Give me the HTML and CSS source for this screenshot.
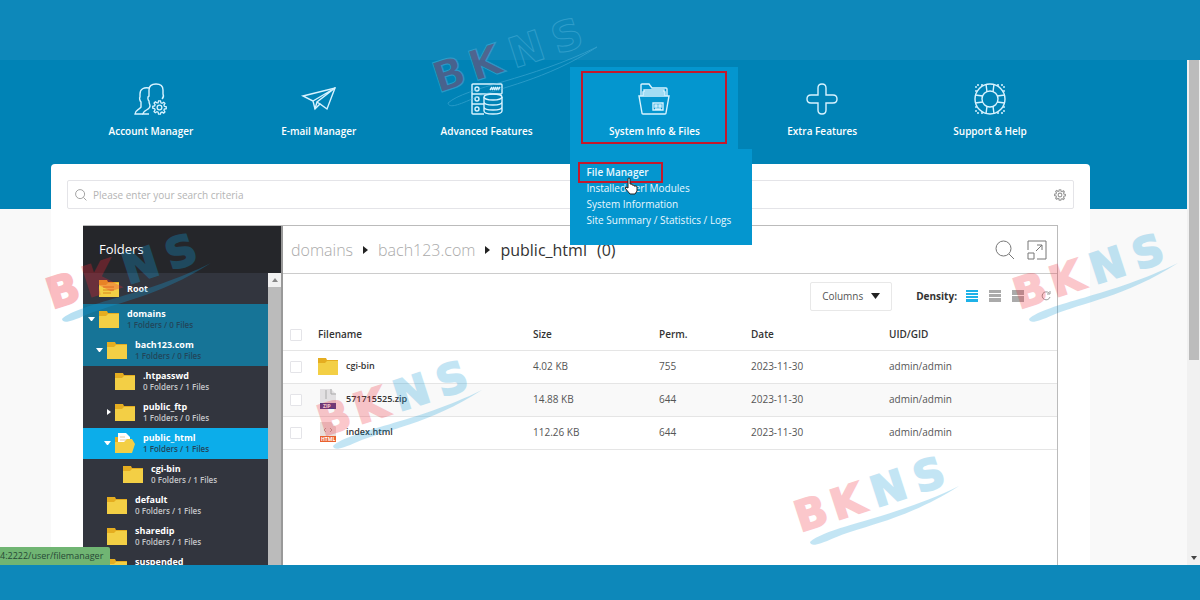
FILE: index.html
```html
<!DOCTYPE html>
<html lang="en">
<head>
<meta charset="utf-8">
<title>File Manager</title>
<link rel="stylesheet" href="styles.css">
</head>
<body>
<svg class="defs" width="0" height="0" aria-hidden="true">
  <symbol id="folder" viewBox="0 0 20 18"><path fill="#e5ad20" d="M0 1h8l1 2h11v4H0z"/><path fill="#f3cf45" d="M0 6h7l2-2h11v14H0z"/></symbol>
  <symbol id="swoosh" viewBox="0 0 180 100"><path d="M18 88C36 72 100 65 167 32C114 66 70 72 42 84C26 91 19 93 18 88z"/></symbol>
  <symbol id="lens" viewBox="0 0 20 20"><circle cx="8.500" cy="8.500" r="7.500" fill="none"/><path d="M14 14l5 5" fill="none"/></symbol>
  <symbol id="gear" viewBox="0 0 16 16"><path fill="none" d="M7 1h2l.5 2 1.200.5 1.800-1.100 1.300 1.300-1.100 1.800.5 1.200 2 .5v2l-2 .5-.5 1.200 1.100 1.800-1.300 1.300-1.800-1.100-1.200.5L9 15H7l-.5-2-1.200-.5-1.800 1.100-1.300-1.300 1.100-1.800L2.800 9.300l-2-.5v-2l2-.5.5-1.200-1.100-1.800 1.300-1.300 1.800 1.100L6.500 3z"/><circle cx="8" cy="8" r="2.500" fill="none"/></symbol>
</svg>
<div class="stage">
  <div class="app">
    <div class="viewport">
      <header class="header">
        <nav class="nav">
          <a class="nav-item" href="#"><svg class="nav-icon" viewBox="0 0 32 32"><path d="M14 31H8c0-4 7-4 7-8 0-2-1-2-1-5-1-1-2-4 0-5V7c0-4 3-6 7-6s7 2 7 6v4c1 2 0 4-1 5"/><path d="M14 5c-5-1-9 1-9 6v3c-1 1 0 4 1 5v5c-2 3-6 3-6 7h8"/><svg x="17" y="17" width="15" height="15"><use href="#gear"/></svg></svg><span>Account Manager</span></a>
          <a class="nav-item" href="#"><svg class="nav-icon" viewBox="0 0 32 32"><path d="M0 13L32 5 24 26 17 21 12 26 10 18z"/><path d="M32 5L10 18M32 5L14 19l3 2M14 19l-2 7"/></svg><span>E-mail Manager</span></a>
          <a class="nav-item" href="#"><svg class="nav-icon" viewBox="0 0 32 32"><path d="M13 31H2q-1 0-1-1V2q0-1 1-1h28q1 0 1 1v8q0 1-1 1H1M1 21h12M19 7l2-3M21 7l2-3M23 7l2-3M25 7l2-3M27 7l2-3"/><circle cx="6" cy="6" r="2"/><circle cx="6" cy="16" r="2"/><circle cx="6" cy="26" r="2"/><ellipse cx="22" cy="14" rx="9" ry="3"/><path d="M13 14v14c0 4 18 4 18 0V14M13 19c0 4 18 4 18 0M13 24c0 4 18 4 18 0"/></svg><span>Advanced Features</span></a>
          <div class="nav-group">
            <a class="nav-item active" href="#"><svg class="nav-icon" viewBox="0 0 32 32"><path d="M1 13h30l-3 17q0 1-1 1H5q-1 0-1-1zM3 13V2q0-1 1-1h7l3 4h14q1 0 1 1v7M5 13V9h22v4M6 9V7h20v2M5 11h22"/><path d="M15 20h10v7H15zM17 22h2v2h-2zM21 22h2v2h-2zM17 26h6"/></svg><span>System Info &amp; Files</span></a>
            <div class="mark mark-nav"></div>
            <div class="menu">
              <a class="current" href="#">File Manager</a>
              <a href="#">Installed Perl Modules</a>
              <a href="#">System Information</a>
              <a href="#">Site Summary / Statistics / Logs</a>
              <div class="mark mark-menu"></div>
              <svg class="pointer" viewBox="0 0 14 18"><path d="M4 11V2q0-1 1-1t1 1v5h2v1h2v1h2q1 0 1 1v4l-2 3H6L1 11q0-2 3 0z" fill="#fff" stroke="#222" stroke-width="1"/></svg>
            </div>
          </div>
          <a class="nav-item" href="#"><svg class="nav-icon" viewBox="0 0 32 32"><path d="M12 12V5q0-4 4-4t4 4v7h7q4 0 4 4t-4 4h-7v7q0 4-4 4t-4-4v-7H5q-4 0-4-4t4-4z"/></svg><span>Extra Features</span></a>
          <a class="nav-item" href="#"><svg class="nav-icon" viewBox="0 0 32 32"><circle cx="16" cy="16" r="15"/><circle cx="16" cy="16" r="8"/><path d="M12 1l1 8M20 1l-1 8M12 31l1-8M20 31l-1-8M1 12l8 1M1 20l8-1M31 12l-8 1M31 20l-8-1"/><path stroke-dasharray="2 2" d="M2 9V2h7M23 2h7v7M30 23v7h-7M9 30H2v-7"/></svg><span>Support &amp; Help</span></a>
        </nav>
      </header>
      <main class="panel">
        <form class="search">
          <svg class="search-icon"><use href="#lens"/></svg>
          <input type="text" aria-label="Search" placeholder="Please enter your search criteria">
          <button class="plain" type="button" aria-label="Search settings"><svg class="search-icon"><use href="#gear"/></svg></button>
        </form>
        <div class="manager">
          <aside class="folders">
            <h2>Folders</h2>
            <div class="tree-wrap">
              <ul class="tree">
                <li><span class="caret"></span><svg class="folder"><use href="#folder"/><path d="M4 9h11M4 12h11M4 15h8" stroke="#d9861d"/></svg><a href="#">Root</a></li>
                <li class="open"><span class="caret down"></span><svg class="folder"><use href="#folder"/></svg><a href="#">domains<small>1 Folders / 0 Files</small></a></li>
                <li class="open l1"><span class="caret down"></span><svg class="folder"><use href="#folder"/></svg><a href="#">bach123.com<small>1 Folders / 0 Files</small></a></li>
                <li class="l2"><span class="caret"></span><svg class="folder"><use href="#folder"/></svg><a href="#">.htpasswd<small>0 Folders / 1 Files</small></a></li>
                <li class="l2"><span class="caret right"></span><svg class="folder"><use href="#folder"/></svg><a href="#">public_ftp<small>1 Folders / 0 Files</small></a></li>
                <li class="l2 selected"><span class="caret down"></span><svg class="folder" viewBox="0 0 20 20"><path d="M0 4h3v14H0z" fill="#e5ad20"/><path d="M3 0h8l4 4v8H3z" fill="#fff"/><path d="M5 4h5M5 7h8" stroke="#e9c9a0"/><path d="M0 9h9l3-3h5l3 5-3 9H0z" fill="#f3cf45"/></svg><a href="#">public_html<small>1 Folders / 1 Files</small></a></li>
                <li class="l3"><span class="caret"></span><svg class="folder"><use href="#folder"/></svg><a href="#">cgi-bin<small>0 Folders / 1 Files</small></a></li>
                <li class="l1"><span class="caret"></span><svg class="folder"><use href="#folder"/></svg><a href="#">default<small>0 Folders / 1 Files</small></a></li>
                <li class="l1"><span class="caret"></span><svg class="folder"><use href="#folder"/></svg><a href="#">sharedip<small>0 Folders / 1 Files</small></a></li>
                <li class="l1 last"><span class="caret"></span><svg class="folder"><use href="#folder"/></svg><a href="#">suspended</a></li>
              </ul>
              <div class="tree-scroll"><span class="up"></span></div>
            </div>
          </aside>
          <section class="files">
            <div class="crumbs">
              <a href="#">domains</a><span class="sep"></span><a href="#">bach123.com</a><span class="sep"></span><span class="here">public_html</span><span class="count">(0)</span>
              <div class="crumb-tools">
                <button class="plain" type="button" aria-label="Search files"><svg class="tool"><use href="#lens"/></svg></button>
                <button class="plain" type="button" aria-label="Expand"><svg class="tool" viewBox="0 0 20 20"><path fill="none" d="M1 10V1h18v18h-9M1 13h6v6H1zM9 11l6-6M10 5h5v5"/></svg></button>
              </div>
            </div>
            <div class="toolbar">
              <button class="columns" type="button">Columns <svg viewBox="0 0 9 6"><path d="M0 0h9L4.500 6z" fill="#222"/></svg></button>
              <strong>Density:</strong>
              <div class="density">
                <button class="plain on" type="button" aria-label="Compact"><svg viewBox="0 0 12 12"><path d="M0 0h12v2H0zM0 3h12v2H0zM0 6h12v2H0zM0 9h12v3H0z"/></svg></button>
                <button class="plain" type="button" aria-label="Normal"><svg viewBox="0 0 12 12"><path d="M0 0h12v3H0zM0 4h12v3H0zM0 8h12v4H0z"/></svg></button>
                <button class="plain" type="button" aria-label="Comfortable"><svg viewBox="0 0 12 12"><path d="M0 0h12v5H0zM0 6h12v6H0z"/></svg></button>
              </div>
              <button class="plain refresh" type="button" aria-label="Refresh"><svg viewBox="0 0 12 12"><path d="M9 3a4 4 0 1 0 1 4M10 1v3H7" fill="none" stroke="#999"/></svg></button>
            </div>
            <table>
              <colgroup><col class="c-check"><col class="c-name"><col class="c-size"><col class="c-perm"><col class="c-date"><col></colgroup>
              <thead><tr><th><input type="checkbox" aria-label="Select all"></th><th>Filename</th><th>Size</th><th>Perm.</th><th>Date</th><th>UID/GID</th></tr></thead>
              <tbody>
                <tr><td><input type="checkbox" aria-label="Select cgi-bin"></td><td><div class="name"><svg class="folder"><use href="#folder"/></svg>cgi-bin</div></td><td>4.02 KB</td><td>755</td><td>2023-11-30</td><td>admin/admin</td></tr>
                <tr><td><input type="checkbox" aria-label="Select 571715525.zip"></td><td><div class="name"><svg class="folder" viewBox="0 0 20 20"><path d="M2 0h11l5 5v15H2z" fill="#e2e0e2"/><path d="M13 0v5h5M8 1v9" fill="none" stroke="#aaa"/><path d="M2 14h16v6H2z" fill="#49408b"/><text class="ext" x="5" y="19">ZIP</text></svg>571715525.zip</div></td><td>14.88 KB</td><td>644</td><td>2023-11-30</td><td>admin/admin</td></tr>
                <tr><td><input type="checkbox" aria-label="Select index.html"></td><td><div class="name"><svg class="folder" viewBox="0 0 20 20"><path d="M2 0h11l5 5v15H2z" fill="#e8dfdc"/><path d="M8 6l-2 2 2 2M12 6l2 2-2 2" fill="none" stroke="#b9a09a"/><path d="M2 14h16v6H2z" fill="#e9622f"/><text class="ext" x="3" y="19">HTML</text></svg>index.html</div></td><td>112.26 KB</td><td>644</td><td>2023-11-30</td><td>admin/admin</td></tr>
              </tbody>
            </table>
          </section>
        </div>
      </main>
    </div>
    <div class="page-scroll"><span class="thumb"></span><span class="arrow"></span></div>
    <div class="status">4:2222/user/filemanager</div>
  </div>
  <svg class="brand b1" viewBox="0 0 180 100"><g transform="translate(12 77) rotate(-18)"><text class="bk" x="-4" y="0">B</text><text class="bk" x="34" y="0">K</text><text class="ns" x="76" y="0">N</text><text class="ns" x="121" y="0">S</text></g><use class="line" href="#swoosh"/></svg>
  <svg class="brand b2" viewBox="0 0 180 100"><g transform="translate(12 77) rotate(-18)"><text class="bk" x="-4" y="0">B</text><text class="bk" x="34" y="0">K</text><text class="ns" x="76" y="0">N</text><text class="ns" x="121" y="0">S</text></g><use class="line" href="#swoosh"/></svg>
  <svg class="brand b3" viewBox="0 0 180 100"><g transform="translate(12 77) rotate(-18)"><text class="bk" x="-4" y="0">B</text><text class="bk" x="34" y="0">K</text><text class="ns" x="76" y="0">N</text><text class="ns" x="121" y="0">S</text></g><use class="line" href="#swoosh"/></svg>
  <svg class="brand b4" viewBox="0 0 180 100"><g transform="translate(12 77) rotate(-18)"><text class="bk" x="-4" y="0">B</text><text class="bk" x="34" y="0">K</text><text class="ns" x="76" y="0">N</text><text class="ns" x="121" y="0">S</text></g><use class="line" href="#swoosh"/></svg>
  <svg class="brand b5" viewBox="0 0 180 100"><g transform="translate(12 77) rotate(-18)"><text class="bk" x="-4" y="0">B</text><text class="bk" x="34" y="0">K</text><text class="ns" x="76" y="0">N</text><text class="ns" x="121" y="0">S</text></g><use class="line" href="#swoosh"/></svg>
</div>
</body>
</html>
```

FILE: styles.css
```css
* { box-sizing: border-box; }
body { margin: 0; font-family: "Open Sans", "Noto Sans", sans-serif; font-size: 10px; line-height: 16px; color: #555; }
a { color: inherit; text-decoration: none; }
svg { display: block; overflow: visible; }
.defs { position: absolute; }
.plain { border: 0; padding: 0; background: none; }

.stage { position: relative; height: 100vh; overflow: hidden; padding: 60px 0 35px; background: #0d88ba; }
.app { position: relative; display: flex; height: 100%; overflow: hidden; }
.viewport { flex: 1; display: flex; flex-direction: column; padding: 0 97px 0 51px; background: linear-gradient(#0083b6 149px, #f9f9f9 149px); }

.header { padding: 7px 16px 15px; }
.nav { display: grid; grid-template-columns: repeat(6, 1fr); }
.nav-group { position: relative; }
.nav-item { display: flex; flex-direction: column; align-items: center; gap: 8px; padding: 16px 0 10px; color: #fff; font-weight: 600; }
.nav-item.active { background: #0496cf; }
.nav-icon { width: 32px; height: 32px; fill: none; stroke: #d8f3ff; stroke-width: 1.4; }
.menu { position: absolute; z-index: 3; top: 100%; left: 0; width: 182px; height: 96px; padding: 15px 16px; background: #0496cf; color: #eaf8ff; }
.menu a { display: block; white-space: nowrap; }
.menu .current { font-weight: 600; }
.mark { position: absolute; border: 2px solid #c4182b; }
.mark-nav { top: 4px; right: 11px; bottom: 5px; left: 11px; }
.mark-menu { top: 13px; left: 8px; width: 85px; height: 21px; }
.pointer { position: absolute; top: 28px; left: 54px; width: 14px; height: 18px; }

.panel { flex: 1; min-height: 0; display: flex; flex-direction: column; gap: 16px; padding: 16px 16px 0; background: #fff; border-radius: 4px 4px 0 0; }
.search { display: flex; align-items: center; gap: 6px; height: 29px; padding: 0 7px; border: 1px solid #e4e4e8; border-radius: 2px; }
.search input { flex: 1; border: 0; outline: 0; padding: 0; font: inherit; }
.search input::placeholder { color: #b4b4b4; }
.search-icon { width: 12px; height: 12px; stroke: #999; stroke-width: 1.5; }

.manager { flex: 1; min-height: 0; display: flex; margin: 0 16px; border: 1px solid #bbb; border-width: 1px 1px 0 0; }
.folders { width: 198px; display: flex; flex-direction: column; background: #32353e; }
.folders h2 { margin: 0; padding: 0 16px; background: #25262a; color: #fff; font-size: 13px; font-weight: 400; line-height: 47px; }
.tree-wrap { flex: 1; min-height: 0; display: flex; }
.tree { flex: 1; overflow: hidden; margin: 0; padding: 0; list-style: none; }
.tree li { display: flex; align-items: center; height: 31px; padding: 0 0 1px 5px; color: #fff; }
.tree .l1 { padding-left: 13px; }
.tree .l2 { padding-left: 21px; }
.tree .l3 { padding-left: 29px; }
.tree .open { background: #167497; }
.tree .selected { background: #0cadea; }
.tree a { margin-left: 8px; font-size: 9px; font-weight: 700; line-height: 11px; }
.tree .last a { align-self: flex-start; padding-top: 4px; }
.tree small { display: block; color: #c4c5c9; font-size: 8px; font-weight: 600; }
.tree .open small, .tree .selected small { color: #22465a; }
.caret { width: 7px; margin-right: 4px; }
.caret.down { border: solid transparent; border-width: 4px 3px 0; border-top-color: #fff; }
.caret.right { border: solid transparent; border-width: 3px 0 3px 4px; border-left-color: #fff; width: 4px; margin: 0 4px 0 3px; }
.folder { flex: none; width: 20px; height: 20px; }
.tree-scroll { width: 13px; background: #bbb; }
.up { display: block; height: 14px; padding-top: 5px; background: #f1f1f1; }
.up::after { content: ""; display: block; width: 0; margin: 0 auto; border: solid transparent; border-width: 0 3px 4px; border-bottom-color: #888; }

.files { flex: 1; min-width: 0; border-left: 2px solid #999; }
.crumbs { display: flex; align-items: center; height: 48px; padding: 0 10px 0 8px; border-bottom: 1px solid #ccc; font-size: 16px; font-weight: 300; line-height: 24px; }
.crumbs a { color: #aaa; }
.crumbs .here, .count { color: #333; font-weight: 400; }
.count { margin-left: 10px; }
.sep { margin: 0 10px; border: solid transparent; border-width: 4px 0 4px 5px; border-left-color: #222; }
.crumb-tools { display: flex; gap: 12px; margin-left: auto; }
.tool { width: 20px; height: 20px; stroke: #777; stroke-width: 1; }
.toolbar { display: flex; align-items: center; justify-content: flex-end; height: 44px; padding-right: 5px; color: #333; }
.columns { display: flex; align-items: center; justify-content: center; gap: 8px; width: 82px; height: 29px; margin-right: 24px; border: 1px solid #e8e8e8; border-radius: 2px; background: #fff; color: #555; font: inherit; }
.columns svg { width: 9px; height: 6px; }
.density { display: flex; gap: 11px; margin: 0 16px 0 9px; fill: #aaa; }
.density svg, .refresh svg { width: 12px; height: 12px; }
.density .on { fill: #1eb2e8; }

table { width: 100%; table-layout: fixed; border-collapse: collapse; }
.c-check { width: 35px; }
.c-name { width: 215px; }
.c-size { width: 126px; }
.c-perm { width: 92px; }
.c-date { width: 138px; }
tr { height: 33px; border-bottom: 1px solid #e5e5e5; }
thead tr { height: 32px; }
tbody tr:nth-child(2) { background: #f9f9f9; }
th, td { padding: 0; text-align: left; }
tbody td { padding-bottom: 2px; }
th { color: #333; font-weight: 600; }
.name { display: flex; align-items: center; gap: 8px; color: #333; font-size: 9px; font-weight: 600; }
table input { appearance: none; display: block; width: 12px; height: 12px; margin: 2px 0 0 7px; border: 1px solid #e4e4e8; border-radius: 1px; background: #fff; }
.ext { fill: #fff; font-size: 5px; font-weight: 700; }

.page-scroll { display: flex; flex-direction: column; justify-content: space-between; align-items: center; width: 13px; padding: 0 1px 5px 2px; background: #f1f1f1; }
.thumb { width: 100%; height: 60%; background: #bcbcbc; }
.arrow { border: solid transparent; border-width: 4px 3px 0; border-top-color: #444; }
.status { position: absolute; bottom: 0; left: 0; height: 18px; padding-right: 7px; border-radius: 0 2px 0 0; background: #70b573; color: #274936; font-size: 9px; line-height: 18px; }

.brand { position: absolute; width: 180px; height: 100px; opacity: .25; pointer-events: none; font-family: "DejaVu Sans", sans-serif; font-size: 42px; font-weight: 700; }
.bk { fill: #f02535; stroke: #f02535; stroke-width: 2; }
.ns, .line { fill: #139bd7; }
.ns { stroke: #139bd7; stroke-width: 2; }
.b1 { left: 430px; top: 15px; opacity: .45; }
.b1 .ns, .b1 .line { fill: none; stroke: #58b7de; stroke-width: 1; }
.b1 .bk { fill: #a03c5c; stroke: #58b7de; stroke-width: 1; }
.b2 { left: 44px; top: 231px; opacity: .3; }
.b3 { left: 315px; top: 358px; }
.b4 { left: 1011px; top: 231px; }
.b5 { left: 792px; top: 454px; }
```
